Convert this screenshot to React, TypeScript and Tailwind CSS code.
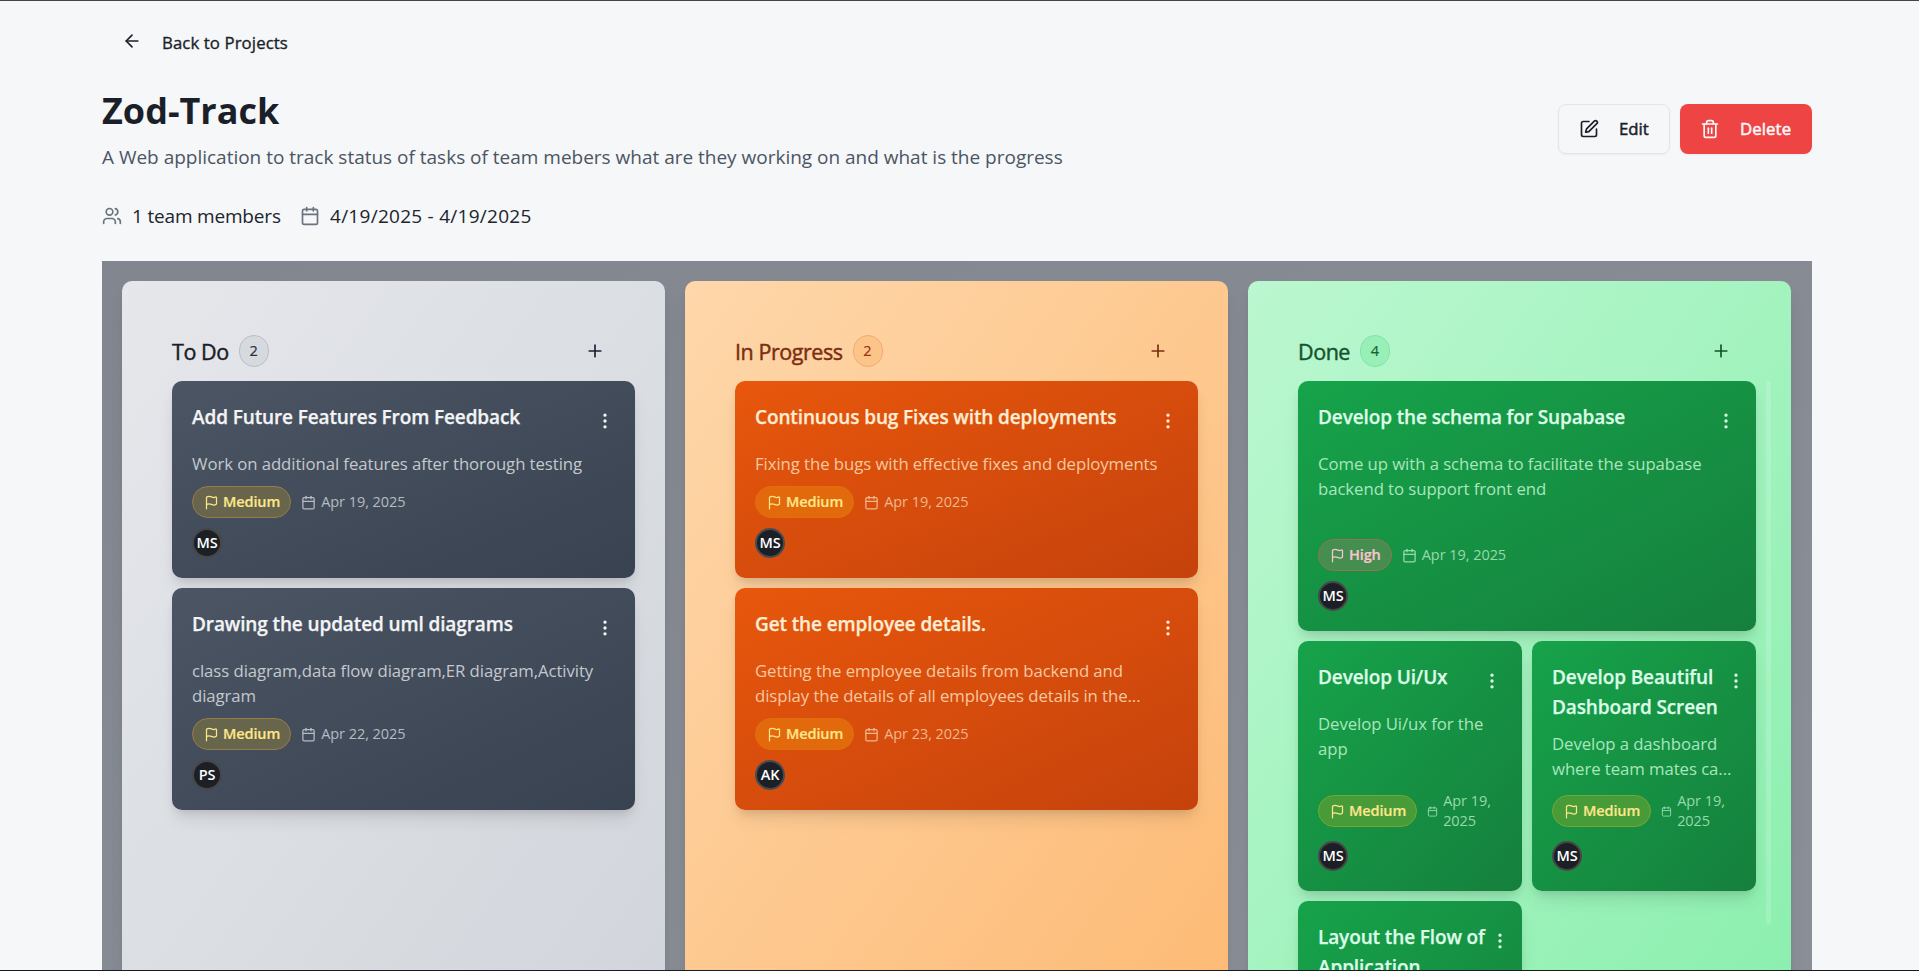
import React from "react";
import { ArrowLeft, Calendar, EllipsisVertical, Flag, Plus, SquarePen, Trash2, Users } from "lucide-react";

type Tone = "gray" | "orange" | "green";

interface Task {
  title: string;
  lines: string[];
  priority: "Medium" | "High";
  date: string[];
  initials: string;
  compact?: boolean;
  menu?: string;
}

const tones: Record<Tone, Record<string, string>> = {
  gray: {
    column: "from-[#e5e7eb] to-[#d1d5db]",
    heading: "text-[#1a1d26]",
    badge: "bg-[#d6dade] border-[#b9bfc6] text-[#2a3040]",
    plus: "text-[#1c2030]",
    card: "from-[#4b5563] to-[#394250]",
    title: "text-[#f3f4f6]",
    text: "text-[#c4c8cf]",
    date: "text-[#b6bbc3]",
    medium: "bg-[#67654b] border-[#977b48] text-[#fde68a]",
    avatar: "border-[#474747]",
  },
  orange: {
    column: "from-[#fed7aa] to-[#fdba74]",
    heading: "text-[#7c2d12]",
    badge: "bg-[#fdc48a] border-[#efac73] text-[#9a3412]",
    plus: "text-[#7c2d12]",
    card: "from-[#e8570c] to-[#c5420c]",
    title: "text-[#ffedd5]",
    text: "text-[#f7c8a0]",
    date: "text-[#f1b68c]",
    medium: "bg-[#e26a0d] border-[#e26f0e] text-[#fde68a]",
    avatar: "border-[#474b52]",
  },
  green: {
    column: "from-[#bbf7d0] to-[#8aefae]",
    heading: "text-[#14532d]",
    badge: "bg-[#98f0b8] border-[#80e5a5] text-[#166534]",
    plus: "text-[#14532d]",
    card: "from-[#16a34a] to-[#15803d]",
    title: "text-[#dcfce7]",
    text: "text-[#a9e6bd]",
    date: "text-[#96d9ad]",
    medium: "bg-[#479c39] border-[#76a633] text-[#fde68a]",
    avatar: "border-[#474747]",
  },
};

const todo: Task[] = [
  { title: "Add Future Features From Feedback", lines: ["Work on additional features after thorough testing"], priority: "Medium", date: ["Apr 19, 2025"], initials: "MS" },
  { title: "Drawing the updated uml diagrams", lines: ["class diagram,data flow diagram,ER diagram,Activity", "diagram"], priority: "Medium", date: ["Apr 22, 2025"], initials: "PS" },
];

const progress: Task[] = [
  { title: "Continuous bug Fixes with deployments", lines: ["Fixing the bugs with effective fixes and deployments"], priority: "Medium", date: ["Apr 19, 2025"], initials: "MS" },
  { title: "Get the employee details.", lines: ["Getting the employee details from backend and", "display the details of all employees details in the..."], priority: "Medium", date: ["Apr 23, 2025"], initials: "AK" },
];

const done: Task[] = [
  { title: "Develop the schema for Supabase", lines: ["Come up with a schema to facilitate the supabase", "backend to support front end"], priority: "High", date: ["Apr 19, 2025"], initials: "MS" },
  { title: "Develop Ui/Ux", lines: ["Develop Ui/ux for the", "app"], priority: "Medium", date: ["Apr 19,", "2025"], initials: "MS", compact: true },
  { title: "Develop Beautiful\nDashboard Screen", lines: ["Develop a dashboard", "where team mates ca..."], priority: "Medium", date: ["Apr 19,", "2025"], initials: "MS", compact: true, menu: "-mr-[10px]" },
  { title: "Layout the Flow of\nApplication", lines: [], priority: "Medium", date: ["Apr 19,", "2025"], initials: "MS", compact: true, menu: "-mr-2" },
];

function TaskCard({ task, tone, className = "" }: { task: Task; tone: Tone; className?: string }) {
  const t = tones[tone];
  return (
    <article className={`flex flex-col rounded-[10px] bg-linear-to-br p-5 shadow-[0_12px_18px_-4px_rgba(0,0,0,0.1),0_5px_8px_-3px_rgba(0,0,0,0.1)] ${t.card} ${className}`}>
      <div className="flex min-h-10 items-start justify-between">
        <h3 className={`-mb-px whitespace-pre pt-px text-[19px] leading-[30px] font-semibold tracking-[-0.12px] [-webkit-text-stroke:0.25px_currentColor] ${t.title}`}>{task.title}</h3>
        <button className={`flex h-10 w-5 shrink-0 items-center justify-center ${task.menu ?? ""} ${t.title}`}>
          <EllipsisVertical size={20} />
        </button>
      </div>
      <p className={`mt-[10px] mb-[2px] whitespace-nowrap text-[16.75px] leading-[25px] tracking-[-0.07px] ${t.text}`}>
        {task.lines.map((line) => (
          <span key={line} className="block">{line}</span>
        ))}
      </p>
      <div className="mt-auto pt-2">
        <div className="flex items-center gap-2.5">
          <span className={`flex h-8 items-center gap-1 rounded-full border pr-[10px] pl-[11px] text-[14.5px] font-semibold tracking-[-0.12px] [-webkit-text-stroke:0.2px_currentColor] ${task.priority === "High" ? "bg-[#458e50] border-[#92774e] text-[#fbc5cf]" : t.medium}`}>
            <Flag size={15} />
            {task.priority}
          </span>
          <span className={`flex items-center gap-[5px] text-[14.5px] leading-5 tracking-[-0.05px] whitespace-nowrap ${t.date}`}>
            <Calendar size={task.compact ? 11 : 15} />
            <span>
              {task.date.map((part) => (
                <span key={part} className="block">{part}</span>
              ))}
            </span>
          </span>
        </div>
        <div className={`mt-2.5 flex size-[30px] items-center justify-center rounded-full border-2 bg-[#1c1f26] text-[14.5px] font-semibold tracking-[-0.1px] text-white ${t.avatar}`}>
          {task.initials}
        </div>
      </div>
    </article>
  );
}

function Column({ title, count, tone, children }: { title: string; count: number; tone: Tone; children: React.ReactNode }) {
  const t = tones[tone];
  return (
    <section className={`min-w-0 flex-1 rounded-[10px] bg-linear-to-br pt-[50px] pr-[20px] pl-[50px] shadow-[0_12px_18px_-4px_rgba(0,0,0,0.1),0_5px_8px_-5px_rgba(0,0,0,0.1)] ${t.column}`}>
      <header className="flex h-[50px] items-start justify-between pr-[30px]">
        <div className="flex h-10 items-center gap-2.5">
          <h2 className={`pt-px text-[21.5px] leading-8 font-medium tracking-[-0.45px] [-webkit-text-stroke:0.45px_currentColor] ${t.heading}`}>{title}</h2>
          <span className={`flex h-8 w-[30px] items-center justify-center rounded-full border text-[14.5px] font-medium [-webkit-text-stroke:0.2px_currentColor] ${t.badge}`}>{count}</span>
        </div>
        <button className={`flex size-10 items-center justify-center ${t.plus}`}>
          <Plus size={20} />
        </button>
      </header>
      {children}
    </section>
  );
}

export default function App() {
  return (
    <div className="h-[971px] overflow-hidden border-y border-t-[#44464b] border-b-[#191b22] bg-[#f5f7f9] font-['Open_Sans','Noto_Sans',sans-serif] text-[#1b1f29]">
      <main className="ml-[102px] w-[1710px]">
        <button className="flex h-[80px] items-center gap-5 pl-5 text-[16.75px] font-medium tracking-[0.1px]">
          <ArrowLeft size={20} />
          <span className="pt-[3px] [-webkit-text-stroke:0.35px_currentColor]">Back to Projects</span>
        </button>
        <div className="flex h-[120px] items-start justify-between">
          <div>
            <h1 className="mt-[5px] text-[36px] leading-[50px] font-bold">Zod-Track</h1>
            <p className="mt-[6px] text-[19px] leading-[30px] tracking-[-0.01px] text-[#4b5563]">
              A Web application to track status of tasks of team mebers what are they working on and what is the progress
            </p>
          </div>
          <div className="mt-[23px] flex gap-2.5 text-[16.75px] font-medium">
            <button className="flex h-[50px] w-[112px] items-center gap-[20px] rounded-lg border border-[#e3e5e7] pl-5 shadow-xs">
              <SquarePen size={20} />
              <span className="[-webkit-text-stroke:0.5px_currentColor]">Edit</span>
            </button>
            <button className="flex h-[50px] w-[132px] items-center gap-[20px] rounded-lg bg-[#ef4444] pl-5 tracking-[0.1px] text-[#fafafa] shadow-xs">
              <Trash2 size={20} />
              <span className="[-webkit-text-stroke:0.5px_currentColor]">Delete</span>
            </button>
          </div>
        </div>
        <div className="flex h-[60px] items-start text-[19px] leading-[30px] text-[#20242d]">
          <span className="flex w-[198px] items-center gap-2.5 tracking-[-0.18px]">
            <Users size={20} className="text-[#6b7280]" />
            1 team members
          </span>
          <span className="flex items-center gap-2.5 tracking-[0.27px]">
            <Calendar size={20} className="text-[#6b7280]" />
            4/19/2025 - 4/19/2025
          </span>
        </div>
        <div className="flex h-[760px] gap-5 bg-linear-to-br from-[#82868f] to-[#8b8f98] pt-5 pr-[21px] pl-5">
          <Column title="To Do" count={2} tone="gray">
            <div className="mr-[10px] flex flex-col gap-2.5">
              {todo.map((task) => (
                <TaskCard key={task.title} task={task} tone="gray" />
              ))}
            </div>
          </Column>
          <Column title="In Progress" count={2} tone="orange">
            <div className="mr-[10px] flex flex-col gap-2.5">
              {progress.map((task) => (
                <TaskCard key={task.title} task={task} tone="orange" />
              ))}
            </div>
          </Column>
          <Column title="Done" count={4} tone="green">
            <div className="flex gap-2.5">
              <div className="grid w-[458px] grid-cols-2 gap-2.5 auto-rows-[250px]">
                {done.map((task, i) => (
                  <TaskCard key={task.title} task={task} tone="green" className={i === 0 ? "col-span-2" : ""} />
                ))}
              </div>
              <div className="h-[544px] w-[5px] rounded-full bg-white/15" />
            </div>
          </Column>
        </div>
      </main>
    </div>
  );
}
